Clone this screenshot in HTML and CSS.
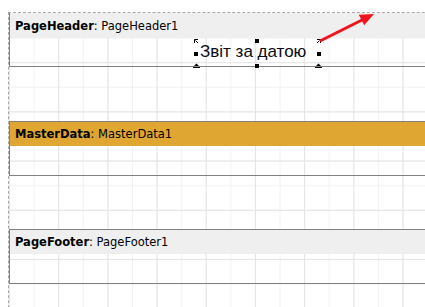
FILE: index.html
```html
<!DOCTYPE html>
<html>
<head>
<meta charset="utf-8">
<link rel="stylesheet" href="styles.css">
</head>
<body>
<div class="canvas">
  <div class="page">
    <div class="band band-first">
      <div class="band-head"><b>PageHeader</b>: PageHeader1</div>
      <div class="band-body"></div>
      <div class="textobj">
        <span class="txt">Звіт за датою</span>
        <span class="h h-tm"></span>
        <span class="h h-ml"></span>
        <span class="h h-mr"></span>
        <span class="h h-bm"></span>
        <svg class="mk mk-tl" width="5" height="5" viewBox="0 0 5 5"><path d="M0.5 4V0.5H4M1.5 1.5L4 4" stroke="#000" stroke-width="1" fill="none"/></svg>
        <svg class="mk mk-tr" width="5" height="5" viewBox="0 0 5 5"><path d="M1 0.5H4.5V4M3.5 1.5L1 4" stroke="#000" stroke-width="1" fill="none"/></svg>
        <svg class="mk mk-bl" width="7" height="5" viewBox="0 0 7 5"><path d="M3.5 0.5L6 3H1Z" fill="#000"/><path d="M0 4.5H7" stroke="#000"/></svg>
        <svg class="mk mk-br" width="7" height="5" viewBox="0 0 7 5"><path d="M3.5 0.5L6 3H1Z" fill="#000"/><path d="M0 4.5H7" stroke="#000"/></svg>
      </div>
    </div>
    <div class="band band-master">
      <div class="band-head"><b>MasterData</b>: MasterData1</div>
      <div class="band-body"></div>
    </div>
    <div class="band band-footer">
      <div class="band-head"><b>PageFooter</b>: PageFooter1</div>
      <div class="band-body"></div>
    </div>
  </div>
  <svg class="arrow" width="425" height="307" viewBox="0 0 425 307">
    <line x1="320" y1="41" x2="364" y2="19" stroke="#f0141c" stroke-width="3"/>
    <polygon points="374,14 364.2,25.2 358.8,14.8" fill="#f0141c"/>
  </svg>
</div>
</body>
</html>
```

FILE: styles.css
```css
html, body {
  margin: 0;
  padding: 0;
  background: #ffffff;
  overflow: hidden;
}

.canvas {
  position: relative;
  width: 425px;
  height: 307px;
  overflow: hidden;
}

.page {
  position: relative;
  margin: 12px 0 0 8px;
  width: 640px;
  height: 320px;
  border-top: 1px dashed #a8a8a8;
  border-left: 1px dashed #a8a8a8;
  display: flex;
  flex-direction: column;
  background-color: #ffffff;
  background-image:
    linear-gradient(to right, #e4e4e4 1px, transparent 1px),
    linear-gradient(to bottom, #e4e4e4 1px, transparent 1px),
    linear-gradient(to right, #f2f2f2 1px, transparent 1px),
    linear-gradient(to bottom, #f2f2f2 1px, transparent 1px);
  background-size: 49.2px 49.2px, 49.2px 49.2px, 24.6px 24.6px, 24.6px 24.6px;
  background-position: 0 0;
}

.band {
  position: relative;
  border-left: 1px solid #808080;
  border-top: 1px solid #808080;
  border-bottom: 1px solid #808080;
  flex: none;
}

.band-first {
  border-top: none;
}

.band-master {
  margin-top: 54px;
}

.band-footer {
  margin-top: 53px;
}

.band-head {
  height: 24px;
  background: #efefef;
  display: flex;
  align-items: center;
  padding-left: 5px;
  font-family: "DejaVu Sans", Verdana, sans-serif;
  font-size: 11.5px;
  color: #000;
  white-space: nowrap;
}

.band-first .band-head {
  height: 25px;
}

.band-head b {
  font-weight: bold;
}

.band-master .band-head {
  background: #dfa731;
}

.band-body {
  height: 29px;
}

.band-first .band-body {
  height: 28px;
}

.textobj {
  position: absolute;
  left: 186px;
  top: 28px;
  width: 123px;
  height: 25px;
}

.txt {
  position: absolute;
  left: 4px;
  top: 1px;
  font-family: "Liberation Sans", Arial, sans-serif;
  font-size: 17px;
  line-height: 20px;
  color: #0a0a14;
  white-space: nowrap;
}

.h {
  position: absolute;
  width: 4px;
  height: 4px;
  background: #000;
}

.h-tm { left: 59px; top: -2px; }
.h-bm { left: 59px; bottom: -2px; }
.h-ml { left: -2px; top: 11px; }
.h-mr { right: -2px; top: 11px; }

.mk {
  position: absolute;
  display: block;
}

.mk-tl { left: -2px; top: -2px; }
.mk-tr { right: -2px; top: -2px; }
.mk-bl { left: -3px; bottom: -2px; }
.mk-br { right: -3px; bottom: -2px; }

.arrow {
  position: absolute;
  left: 0;
  top: 0;
  pointer-events: none;
}
```
